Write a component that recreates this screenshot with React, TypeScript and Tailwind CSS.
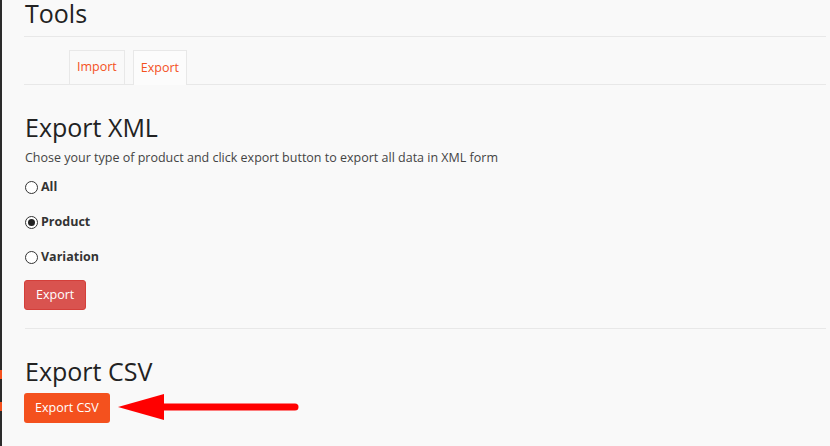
import React from "react";

function Radio({ label, checked }: { label: string; checked?: boolean }) {
  return (
    <label className="flex items-center gap-[3px] h-[17px]">
      <span className="w-[13px] h-[13px] rounded-full border border-[#333] bg-white flex items-center justify-center">
        {checked && <span className="w-[7px] h-[7px] rounded-full bg-[#222]" />}
      </span>
      {label}
    </label>
  );
}

export default function App() {
  return (
    <div
      className="flex w-[830px] h-[446px] overflow-hidden bg-[#f9f9f9] text-[#333]"
      style={{ fontFamily: '"Open Sans", "Liberation Sans", sans-serif' }}
    >
      <div className="relative w-[2px] shrink-0 bg-[#2b2b2b]">
        <div className="absolute left-0 top-[370px] w-[2px] h-[9px] bg-[#f4511e]" />
        <div className="absolute left-0 top-[402px] w-[2px] h-[9px] bg-[#f4511e]" />
      </div>
      <div className="flex-1 pl-[22px] pr-[4px]">
        <h1 className="text-[25px] leading-[26px] pl-px pb-[10px] border-b border-[#e8e8e8] text-[#222]">
          Tools
        </h1>
        <div className="flex items-end pl-[45px] pt-[13px] border-b border-[#e8e8e8] gap-[8px]">
          <div className="h-[34px] px-[7px] flex items-center border border-b-0 border-[#e8e8e8] text-[12.5px] text-[#f4511e]">
            Import
          </div>
          <div className="h-[35px] -mb-px px-[7px] flex items-center border border-b-0 border-[#e8e8e8] bg-[#fcfcfc] text-[12.5px] text-[#f4511e]">
            Export
          </div>
        </div>
        <h2 className="text-[25px] leading-[30px] mt-[27px] pl-px text-[#222]">Export XML</h2>
        <p className="text-[12.5px] leading-[17px] mt-[7px] pl-px text-[#444]">
          Chose your type of product and click export button to export all data in XML form
        </p>
        <div className="flex flex-col gap-[18px] mt-[13px] pl-px text-[12.5px] font-bold text-[#333]">
          <Radio label="All" />
          <Radio label="Product" checked />
          <Radio label="Variation" />
        </div>
        <button className="mt-[14px] h-[30px] px-[11px] rounded-[3px] bg-[#d9534f] border border-[#d43f3a] text-white text-[12.5px]">
          Export
        </button>
        <div className="mt-[18px] ml-px border-t border-[#e8e8e8]" />
        <h2 className="text-[25px] leading-[30px] mt-[27px] pl-px text-[#222]">Export CSV</h2>
        <div className="relative mt-[7px]">
          <button className="h-[30px] px-[11px] rounded-[3px] bg-[#f4511e] text-white text-[12.5px]">
            Export CSV
          </button>
          <svg
            className="absolute left-[94px] top-0"
            width="185"
            height="32"
            viewBox="0 0 185 32"
          >
            <polygon points="0,14 46,1 46,27" fill="#ff0000" />
            <line x1="44" y1="14" x2="177" y2="14" stroke="#ff0000" strokeWidth="7" strokeLinecap="round" />
          </svg>
        </div>
      </div>
    </div>
  );
}
